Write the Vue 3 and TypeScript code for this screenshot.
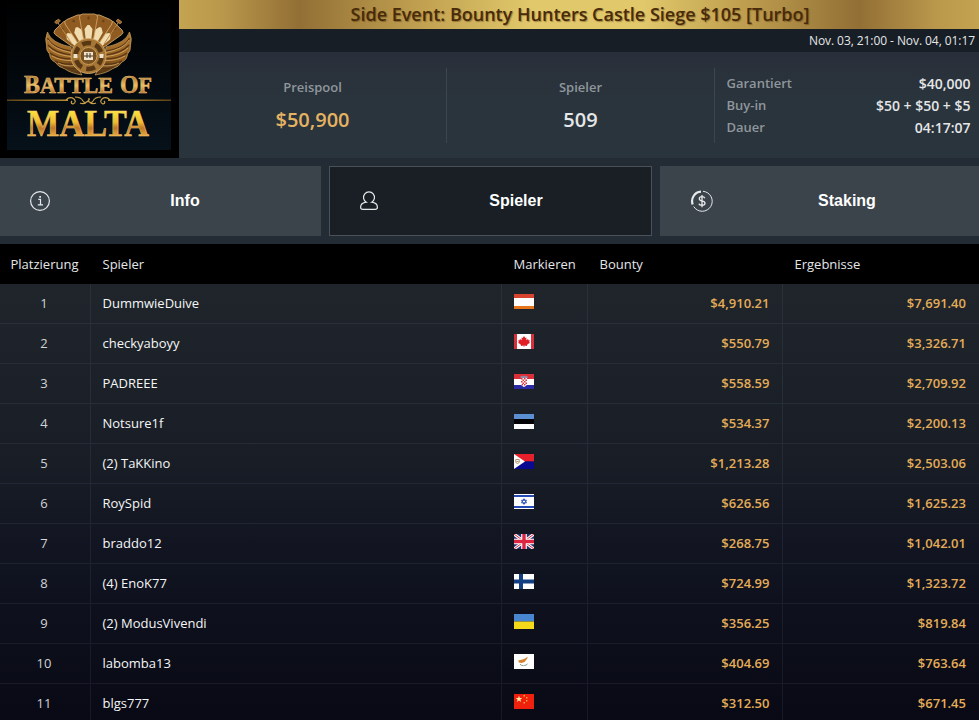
<script setup lang="ts">
interface Player {
    place: number;
    name: string;
    flag: string;
    bounty: string;
    result: string;
}

const tabs = [
    { id: 'info', title: 'Info' },
    { id: 'players', title: 'Spieler' },
    { id: 'staking', title: 'Staking' },
];

const activeTab = 'players';

const details = [
    { label: 'Garantiert', value: '$40,000' },
    { label: 'Buy-in', value: '$50 + $50 + $5' },
    { label: 'Dauer', value: '04:17:07' },
];

const players: Player[] = [
    { place: 1, name: 'DummwieDuive', flag: 'at', bounty: '$4,910.21', result: '$7,691.40' },
    { place: 2, name: 'checkyaboyy', flag: 'ca', bounty: '$550.79', result: '$3,326.71' },
    { place: 3, name: 'PADREEE', flag: 'hr', bounty: '$558.59', result: '$2,709.92' },
    { place: 4, name: 'Notsure1f', flag: 'ee', bounty: '$534.37', result: '$2,200.13' },
    { place: 5, name: '(2) TaKKino', flag: 'sx', bounty: '$1,213.28', result: '$2,503.06' },
    { place: 6, name: 'RoySpid', flag: 'il', bounty: '$626.56', result: '$1,625.23' },
    { place: 7, name: 'braddo12', flag: 'gb', bounty: '$268.75', result: '$1,042.01' },
    { place: 8, name: '(4) EnoK77', flag: 'fi', bounty: '$724.99', result: '$1,323.72' },
    { place: 9, name: '(2) ModusVivendi', flag: 'ua', bounty: '$356.25', result: '$819.84' },
    { place: 10, name: 'labomba13', flag: 'cy', bounty: '$404.69', result: '$763.64' },
    { place: 11, name: 'blgs777', flag: 'cn', bounty: '$312.50', result: '$671.45' },
];

// inner markup of every flag, viewBox 20 x 15
const flags: Record<string, string> = {
    at: '<path fill="#fff" d="M0 0h20v15H0z"/><path fill="#d8432f" d="M0 0h20v4H0z"/><path fill="#e5761c" d="M0 12h20v3H0z"/>',
    ca: '<path fill="#fff" d="M0 0h20v15H0z"/><path fill="#d8303a" d="M0 0h3v15H0zM17 0h3v15h-3z"/><path fill="#e01f28" d="M10 2l1.3 2 1.2-.4-.3 2.6L14 5l.5 1.3 1.3-.1-.6 1.8.8.6-3.1 2.3.2 1-2.8-.4V13h-.6v-1.5l-2.8.4.2-1L4 8.6l.8-.6-.6-1.8 1.3.1L6 5l1.8 1.2-.3-2.6 1.2.4z"/>',
    hr: '<path fill="#fff" d="M0 0h20v15H0z"/><path fill="#dc3038" d="M0 0h20v5H0z"/><path fill="#2a2aa5" d="M0 11h20v4H0z"/><path fill="#fff" d="M7 4h6v6q0 2-3 3-3-1-3-3z"/><path fill="#e0303a" d="M7 4h1.5v1.5H7zM10 4h1.5v1.5H10zM8.5 5.5H10V7H8.5zM11.5 5.5H13V7h-1.5zM7 7h1.5v1.5H7zM10 7h1.5v1.5H10zM8.5 8.5H10V10H8.5zM11.5 8.5H13V10h-1.5zM7.5 10H9v1.5H8zM10 10h1.5v1.5H10z"/><path fill="#8d8fae" d="M6.5 2.5l1-.8 1 .8 1.5-1 1.5 1 1-.8 1 .8V4h-7z"/>',
    ee: '<path fill="#fff" d="M0 0h20v15H0z"/><path fill="#5b8fd2" d="M0 0h20v5H0z"/><path fill="#020204" d="M0 5h20v5H0z"/>',
    sx: '<path fill="#e8202c" d="M0 0h20v7.5H0z"/><path fill="#0a0a91" d="M0 7.5h20V15H0z"/><path fill="#fff" d="M0 0l11 7.5L0 15z"/><path fill="none" stroke="#ad9470" d="M1.8 5.5h3.4v3q-1.7 2.2-3.4 0zM2.5 7.5h2"/>',
    il: '<path fill="#fff" d="M0 0h20v15H0z"/><path fill="#234bb5" d="M0 1h20v2H0zM0 12h20v2H0z"/><path fill="none" stroke="#234bb5" stroke-width=".9" d="M10 4.7l2.5 4.2h-5zM10 10.4L7.500 6.200h5z"/>',
    gb: '<path fill="#25346f" d="M0 0h20v15H0z"/><path stroke="#fff" stroke-width="3" d="M0 0l20 15M20 0L0 15"/><path stroke="#d81e3a" stroke-width="1" d="M0 0l20 15M20 0L0 15"/><path stroke="#fff" stroke-width="5.6" d="M10 0v15M0 7.500h20"/><path stroke="#dc2440" stroke-width="3.4" d="M10 0v15M0 7.500h20"/>',
    fi: '<path fill="#fff" d="M0 0h20v15H0z"/><path fill="#123f82" d="M5 0h4v15H5zM0 5.500h20v4H0z"/>',
    ua: '<path fill="#4886cf" d="M0 0h20v7.500H0z"/><path fill="#f4d91b" d="M0 7.500h20V15H0z"/>',
    cy: '<path fill="#fff" d="M0 0h20v15H0z"/><path fill="#d7822c" d="M4.300 6.600l3-.8 2.700-.9 4-2.200-1.400 2.700-1 1-1 1.700-3.200 1-2.500-.7z"/><path fill="none" stroke="#7d9b80" d="M6 10.200q1.500 1.800 3.500 1.300M13.500 9.700q-1 1.900-3.300 1.800"/>',
    cn: '<path fill="#f0200f" d="M0 0h20v15H0z"/><path fill="#ffe9a0" d="M5 1.800l.9 2.200h2.300L6.400 5.500l.7 2.400L5 6.500 2.900 7.900l.7-2.400L1.800 4h2.300z"/><path fill="#f5a833" d="M9.500 1H11v1.400H9.500zM12 3h1.400v1.500H12zM12 6h1.400v1.400H12zM9.500 8H11v1.500H9.500z"/>',
};

// angles of the cards fanned out behind the chip
const cards = [-44, 44, -23, 23, 0];
</script>

<template>
    <div class="lobby">
        <header class="header">
            <div class="logo">
                <svg width="179" height="158" viewBox="0 0 179 158">
                    <defs>
                        <linearGradient id="logo-bg" x1="0" y1="0" x2="0" y2="1">
                            <stop offset="0" stop-color="#000" />
                            <stop offset=".45" stop-color="#02070b" />
                            <stop offset="1" stop-color="#06111a" />
                        </linearGradient>
                        <linearGradient id="gold-small" x1="0" y1="0" x2="0" y2="1">
                            <stop offset=".2" stop-color="#a06a27" />
                            <stop offset=".55" stop-color="#efbd61" />
                            <stop offset=".8" stop-color="#b8722a" />
                        </linearGradient>
                        <linearGradient id="gold-big" x1="0" y1="0" x2="0" y2="1">
                            <stop offset=".2" stop-color="#fbe53e" />
                            <stop offset=".48" stop-color="#f2bc2c" />
                            <stop offset=".62" stop-color="#bf7626" />
                            <stop offset=".8" stop-color="#e9a83c" />
                        </linearGradient>
                        <linearGradient id="line" x1="0" y1="0" x2="1" y2="0">
                            <stop offset="0" stop-color="#5b4216" />
                            <stop offset=".5" stop-color="#d9a640" />
                            <stop offset="1" stop-color="#5b4216" />
                        </linearGradient>
                        <linearGradient id="wing" x1="0" y1="0" x2="0" y2="1">
                            <stop offset="0" stop-color="#b27a35" />
                            <stop offset=".6" stop-color="#96601f" />
                            <stop offset="1" stop-color="#4c3013" />
                        </linearGradient>
                    </defs>
                    <rect width="179" height="158" fill="#000" />
                    <rect x="7" width="164" height="150" fill="url(#logo-bg)" />

                    <g v-for="angle in cards" :key="angle" :transform="`rotate(${angle} 88.500 56)`">
                        <path fill="#8f5b21" stroke="#d5ab6c" stroke-width=".8" d="M84 42L79.500 17.500q-.5-3 3-3.500h12q3.500.5 3 3.500L93 42z" />
                        <path fill="#f0dcae" d="M86 42l-1.500-13 3-4h2l3 4L91 42z" />
                        <path fill="#6e4217" d="M87 18l1.500-2 1.500 2-1.500 2z" />
                    </g>
                    <path fill="none" stroke="#b98a48" d="M56 20l16 24M120 20l-16 24" />
                    <path fill="#9a642a" stroke="#d5ab6c" stroke-width=".5" d="M54.500 22l4-3 2 2-4 3zM122 22l-4-3-2 2 4 3z" />
                    <g v-for="side in [1, -1]" :key="side" :transform="side === 1 ? '' : 'translate(177 0) scale(-1 1)'">
                        <path
                            fill="url(#wing)"
                            stroke="#c9a061"
                            stroke-width=".7"
                            d="M47.500 32Q51 43 71 47L73 60 82 75Q70 73 65 69 58 67 55 62 50 60 49.500 54 46 51 46.500 45 44.500 39 47.500 32Z"
                        />
                        <path
                            fill="none"
                            stroke="#573514"
                            stroke-width="1.200"
                            d="M47.500 38Q52 48 71 51M48 45Q55 53 71 55M50 53Q58 59 72 59M55 61Q62 65 75 64M63 67Q70 70 79 68"
                        />
                        <path
                            fill="none"
                            stroke="#e2b979"
                            stroke-width=".7"
                            d="M48 40Q53 49 71 52.500M49 48Q56 55 71 56.500M52 56Q60 61 73 60.500M58 63Q65 67 76 65.500"
                        />
                    </g>
                    <circle cx="88.500" cy="56" r="17.500" fill="#a67635" stroke="#d8b072" stroke-width=".8" />
                    <circle cx="88.500" cy="56" r="13" fill="none" stroke="#573714" stroke-width="4.500" stroke-dasharray="9 4.600" />
                    <circle cx="88.500" cy="56" r="8.500" fill="#79501f" stroke="#c79d58" />
                    <path fill="#efe5cf" d="M84 52h9v8h-9zM73.500 54h4v4h-4zM99.500 54h4v4h-4z" />
                    <path stroke="#4a321a" d="M84 56h9M87 53v5M90 53v5" />

                    <g class="logo-text" stroke="#f4cd82" stroke-width=".5">
                        <text x="24" y="92.500" fill="url(#gold-small)" textLength="89" lengthAdjust="spacingAndGlyphs">
                            <tspan font-size="26">B</tspan><tspan font-size="24">ATTLE</tspan>
                        </text>
                        <text x="120" y="92.500" fill="url(#gold-small)" textLength="32" lengthAdjust="spacingAndGlyphs">
                            <tspan font-size="26">O</tspan><tspan font-size="24">F</tspan>
                        </text>
                        <text x="27" y="136" font-size="38" fill="url(#gold-big)" textLength="122" lengthAdjust="spacingAndGlyphs">MALTA</text>
                    </g>

                    <path fill="url(#line)" d="M7 99.500h61v1.400H7zM108 99.500h63v1.400h-63z" />
                    <g fill="none" stroke="#c99f4a" stroke-width="1.200">
                        <path d="M66 100q4-4 8-1 3 3-1 5-3-1-1-3M75 97q6 0 8 4 2 3 5 0 3-3 0-2M80 103q4 2 8-2" />
                        <path d="M110 100q-4-4-8-1-3 3 1 5 3-1 1-3M101 97q-6 0-8 4-2 3-5 0M96 103q-4 2-8-2" />
                    </g>
                </svg>
            </div>

            <div class="summary">
                <h1 class="title">Side Event: Bounty Hunters Castle Siege $105 [Turbo]</h1>
                <div class="date">Nov. 03, 21:00 - Nov. 04, 01:17</div>
                <div class="stats">
                    <div class="stat">
                        <span class="stat-label">Preispool</span>
                        <span class="stat-value gold">$50,900</span>
                    </div>
                    <div class="stat">
                        <span class="stat-label">Spieler</span>
                        <span class="stat-value">509</span>
                    </div>
                    <dl class="details">
                        <div v-for="item in details" :key="item.label" class="detail">
                            <dt>{{ item.label }}</dt>
                            <dd>{{ item.value }}</dd>
                        </div>
                    </dl>
                </div>
            </div>
        </header>

        <nav class="tabs">
            <button v-for="tab in tabs" :key="tab.id" class="tab" :class="[tab.id, { active: tab.id === activeTab }]">
                <svg class="tab-icon" width="24" height="24" viewBox="0 0 24 24" fill="none" stroke="#e6e9eb">
                    <template v-if="tab.id === 'info'">
                        <circle cx="12" cy="12" r="9.400" stroke-width="1.200" />
                        <path stroke-width="1.200" d="M10.300 10.300h2.200v5.200M9.800 15.800H15" />
                        <rect x="11.300" y="7" width="1.700" height="1.700" fill="#e6e9eb" stroke="none" />
                    </template>
                    <template v-else-if="tab.id === 'players'">
                        <path
                            stroke-width="1.200"
                            d="M9.300 13.200A5.500 5.500 0 1 1 14.700 13.200C18.200 13.700 20.400 15.600 20.400 18.200C20.400 19.700 19.600 20.300 18 20.300H6C4.400 20.300 3.600 19.700 3.600 18.200C3.600 15.600 5.800 13.700 9.300 13.200Z"
                        />
                    </template>
                    <template v-else>
                        <path stroke-width="1" d="M13 2.300A10 10 0 1 1 3.700 17.500" />
                        <path stroke-width="2.200" d="M2.700 15.500A9.500 9.500 0 0 1 11 2.700" />
                        <path stroke-width="1.300" d="M14.800 9.200Q14.300 7.700 12 7.700Q9.300 7.700 9.300 9.700Q9.300 11.400 12 11.900Q15 12.400 15 14.300Q15 16.400 12 16.400Q9.300 16.400 9 14.700M12 6v12.200" />
                    </template>
                </svg>
                <span class="tab-title">{{ tab.title }}</span>
            </button>
        </nav>

        <table class="players-table">
            <colgroup>
                <col class="col-place" />
                <col class="col-name" />
                <col class="col-flag" />
                <col class="col-bounty" />
                <col class="col-result" />
            </colgroup>
            <thead>
                <tr>
                    <th>Platzierung</th>
                    <th>Spieler</th>
                    <th>Markieren</th>
                    <th>Bounty</th>
                    <th>Ergebnisse</th>
                </tr>
            </thead>
            <tbody>
                <tr v-for="player in players" :key="player.place">
                    <td class="place">{{ player.place }}</td>
                    <td class="name">{{ player.name }}</td>
                    <td>
                        <svg class="flag" width="20" height="15" viewBox="0 0 20 15" v-html="flags[player.flag]"></svg>
                    </td>
                    <td class="money">{{ player.bounty }}</td>
                    <td class="money">{{ player.result }}</td>
                </tr>
            </tbody>
        </table>
    </div>
</template>

<style>
body {
    margin: 0;
    background: #232c35;
    overflow: hidden;
}
</style>

<style scoped>
.lobby {
    height: 720px;
    overflow: hidden;
    background: #232c35;
    color: #e4e6e8;
    font-family: "Open Sans", "Noto Sans", sans-serif;
    font-size: 13px;
}

.header {
    display: flex;
    height: 158px;
}

.logo {
    width: 179px;
    flex: none;
}

.logo svg {
    display: block;
}

.logo-text {
    font-family: "Liberation Serif", serif;
    font-weight: bold;
}

.summary {
    flex: 1;
    display: flex;
    flex-direction: column;
}

.title {
    margin: 0;
    height: 29px;
    line-height: 28px;
    padding-left: 2px;
    text-align: center;
    font-size: 18px;
    font-weight: 600;
    color: #482b0b;
    text-shadow: 1px 1px 1px rgba(70, 40, 0, 0.4);
    background: linear-gradient(90deg, #c3a451 0%, #bb994c 5%, #926f35 15%, #c0a050 30%, #e1c86b 44%, #e1c86b 58%, #c0a050 70%, #926f35 85%, #bb994c 95%, #c3a451 100%);
}

.date {
    height: 23px;
    line-height: 24px;
    padding-right: 4px;
    text-align: right;
    font-size: 12px;
    letter-spacing: -0.07px;
    background: #171e25;
}

.stats {
    flex: 1;
    display: flex;
    align-items: flex-start;
    padding-top: 16px;
    background: linear-gradient(#292f3a, #2a343c 45%, #2a343c);
}

.stat {
    box-sizing: border-box;
    width: 268px;
    height: 75px;
    display: flex;
    flex-direction: column;
    align-items: center;
    border-right: 1px solid #3d454d;
}

.stat-label {
    margin-top: 10px;
    line-height: 18px;
    font-weight: 600;
    color: #8f969c;
}

.stat-value {
    margin-top: 10px;
    line-height: 28px;
    font-size: 20px;
    font-weight: 600;
}

.gold {
    color: #e5b262;
}

.details {
    flex: 1;
    margin: 0;
    padding: 4px 8.5px 0 11.5px;
}

.detail {
    display: flex;
    justify-content: space-between;
    line-height: 22px;
    font-weight: 600;
}

.detail dt {
    color: #8f969c;
}

.detail dd {
    margin: 0;
    padding-top: 1px;
    height: 21px;
    font-size: 14px;
}

.tabs {
    display: flex;
    gap: 8px;
    margin: 8px 0;
}

.tab {
    box-sizing: border-box;
    height: 70px;
    flex: none;
    width: 323px;
    display: flex;
    align-items: center;
    padding: 0 0 0 27px;
    border: 1px solid #3c434b;
    background: #3b434b;
    color: #fff;
    font: bold 16px "Liberation Sans", Arial, sans-serif;
}

.tab.info {
    width: 321px;
}

.tab.staking {
    width: 319px;
    padding-left: 29px;
}

.tab.active {
    background: #1a1f26;
    border-color: #4a5158;
}

.tab-icon {
    flex: none;
}

.tab-title {
    flex: 1;
    text-align: center;
}

.tab.info .tab-title {
    padding-right: 2px;
}

.tab.staking .tab-title {
    padding-left: 2px;
}

.players-table {
    width: 979px;
    table-layout: fixed;
    border-collapse: separate;
    border-spacing: 0;
}

.col-place { width: 91px; }
.col-name { width: 411px; }
.col-flag { width: 86px; }
.col-bounty { width: 195px; }

.players-table th {
    box-sizing: border-box;
    height: 40px;
    padding: 0 11.5px;
    background: #000;
    font-weight: 400;
    text-align: left;
}

.players-table th:first-child {
    padding: 0 10.5px;
}

.players-table tbody {
    background: linear-gradient(#1f252b, #1a1f27 35%, #101320 65%, #080914);
}

.players-table td {
    box-sizing: border-box;
    height: 40px;
    padding: 0 12.5px 2px 11.5px;
    border-right: 1px solid rgba(120, 140, 165, 0.12);
    border-bottom: 1px solid rgba(120, 140, 165, 0.12);
}

.players-table td:last-child {
    padding-right: 13px;
    border-right: 0;
}

.players-table .place {
    padding: 0 2px 2px 0;
    text-align: center;
    color: #d0d3d7;
}

.players-table .name {
    color: #f5f6f7;
}

.flag {
    display: block;
    margin: 0 0 3px 0.5px;
}

.money {
    text-align: right;
    font-weight: 600;
    color: #e3ac58;
}
</style>
